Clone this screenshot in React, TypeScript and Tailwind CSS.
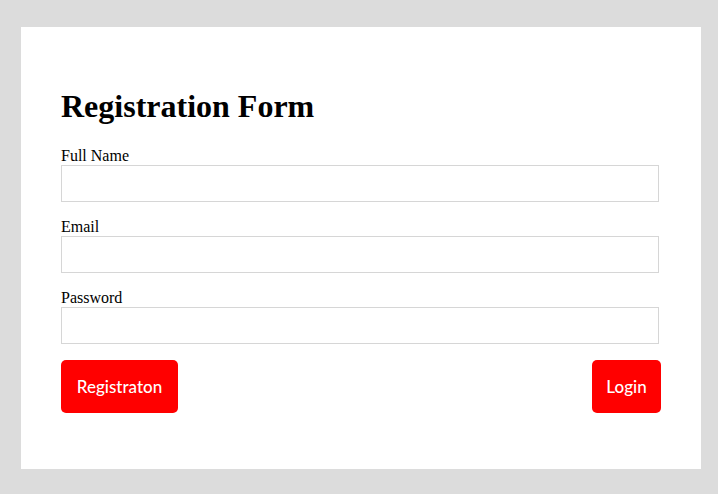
import React from 'react';

const fields = ['Full Name', 'Email', 'Password'];

const App: React.FC = () => {
  return (
    <div className="h-screen bg-[#dcdcdc] pt-[27px] pl-[21px]">
      <div className="w-[680px] h-[442px] bg-white px-[40px] pt-[40px] font-['Liberation_Serif',serif] text-black">
        <h1 className="mt-[21px] mb-[21px] text-[32px] leading-[37px] font-bold">Registration Form</h1>
        {fields.map((f) => (
          <div key={f} className="mb-[15px]">
            <label className="block pt-[1px] text-[16px] leading-[18px]">{f}</label>
            <input
              type={f === 'Password' ? 'password' : f === 'Email' ? 'email' : 'text'}
              className="block w-[598px] h-[37px] border border-[#d6d6d6] bg-white outline-none px-2"
            />
          </div>
        ))}
        <div className="mt-[16px] flex justify-between">
          <button className="w-[117px] h-[53px] rounded-[5px] bg-[#ff0000] text-white text-[17px] font-medium font-['Comic_Sans_MS','Lato',sans-serif] flex items-center justify-center">
            Registraton
          </button>
          <button className="w-[69px] h-[53px] rounded-[5px] bg-[#ff0000] text-white text-[17px] font-medium font-['Comic_Sans_MS','Lato',sans-serif] flex items-center justify-center">
            Login
          </button>
        </div>
      </div>
    </div>
  );
};

export default App;
